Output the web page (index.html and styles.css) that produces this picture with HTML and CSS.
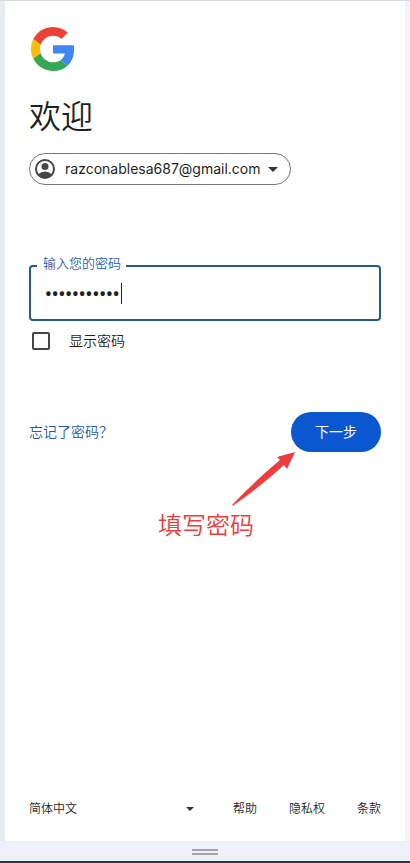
FILE: index.html
```html
<!DOCTYPE html>
<html lang="zh-CN">
<head>
    <meta charset="UTF-8">
    <meta name="viewport" content="width=device-width, initial-scale=1.0">
    <title>登录 - Google 账号</title>
    <link rel="stylesheet" href="styles.css">
</head>
<body>
    <div class="screen">
        <main>
            <!-- Logo -->
            <svg class="logo" viewBox="0 0 48 48" aria-label="Google">
                <path fill="#EA4335" d="M24 9.5c3.54 0 6.71 1.22 9.21 3.6l6.85-6.85C35.9 2.38 30.47 0 24 0 14.62 0 6.51 5.38 2.56 13.22l7.98 6.19C12.43 13.72 17.74 9.5 24 9.5z"/>
                <path fill="#4285F4" d="M46.98 24.55c0-1.57-.15-3.09-.38-4.55H24v9.02h12.94c-.58 2.96-2.26 5.48-4.78 7.18l7.73 6c4.51-4.18 7.09-10.36 7.09-17.65z"/>
                <path fill="#FBBC05" d="M10.53 28.59c-.48-1.45-.76-2.99-.76-4.59s.27-3.14.76-4.59l-7.98-6.19C.92 16.46 0 20.12 0 24c0 3.88.92 7.54 2.56 10.78l7.97-6.19z"/>
                <path fill="#34A853" d="M24 48c6.48 0 11.93-2.13 15.89-5.81l-7.73-6c-2.15 1.45-4.92 2.3-8.16 2.3-6.26 0-11.57-4.22-13.47-9.91l-7.98 6.19C6.51 42.62 14.62 48 24 48z"/>
            </svg>
            <h1>欢迎</h1>

            <!-- Account -->
            <button type="button" class="account">
                <svg class="avatar" viewBox="0 0 20 20">
                    <circle cx="10" cy="10" r="9" fill="none" stroke="currentColor" stroke-width="2"/>
                    <circle cx="10" cy="7.5" r="3.5"/>
                    <path d="M3 15.5Q6 12.5 10 12.5t7 3Q14 19 10 19t-7-3.5z"/>
                </svg>
                <span>razconablesa687@gmail.com</span>
                <svg class="arrow" viewBox="0 0 10 5"><path d="M0 0h10L5 5z"/></svg>
            </button>

            <!-- Password -->
            <form>
                <div class="field">
                    <label for="password">输入您的密码</label>
                    <input type="password" id="password" value="abcdefghijk">
                    <span class="caret"></span>
                </div>
                <div class="show">
                    <input type="checkbox" id="showPassword">
                    <label for="showPassword">显示密码</label>
                </div>
                <div class="actions">
                    <a href="#forgot">忘记了密码？</a>
                    <div class="next">
                        <button type="button">下一步</button>
                        <!-- Hint pointing at the button -->
                        <div class="hint">
                            <svg viewBox="0 0 64 54"><path d="M63 0 45 5l3 3Q25 27 0 53q1 1 2 0Q28 35 52 13l3 4z"/></svg>
                            <p>填写密码</p>
                        </div>
                    </div>
                </div>
            </form>
        </main>

        <!-- Footer -->
        <footer>
            <div class="language">
                <select aria-label="语言">
                    <option>简体中文</option>
                </select>
                <svg class="arrow" viewBox="0 0 10 5"><path d="M0 0h10L5 5z"/></svg>
            </div>
            <nav>
                <a href="#help">帮助</a>
                <a href="#privacy">隐私权</a>
                <a href="#terms">条款</a>
            </nav>
        </footer>
    </div>
    <div class="handle"></div>
</body>
</html>
```
FILE: styles.css
```css
* {
    margin: 0;
    padding: 0;
    box-sizing: border-box;
}

body {
    font-family: Roboto, "Noto Sans CJK SC", sans-serif;
    font-size: 14px;
    font-weight: 350;
    line-height: 20px;
    background: #eef1f9;
    color: #1f1f1f;
    min-height: 100vh;
    display: flex;
    flex-direction: column;
    border-top: 1px solid #d9dbe0;
    border-bottom: 2px solid #263746;
}

.screen {
    flex: 1;
    display: flex;
    flex-direction: column;
    justify-content: space-between;
    margin: 0 5px;
    padding: 26px 24px 22px;
    background: #fff;
    box-shadow: 5px 0 #f3f6f8, -5px 0 #e8ebf3;
}

.logo {
    display: block;
    width: 44px;
    height: 44px;
    margin-left: 2px;
}

h1 {
    margin: 26px 0 16px;
    font-size: 32px;
    font-weight: 350;
    line-height: 40px;
}

button,
input,
select {
    font: inherit;
    color: inherit;
}

a {
    color: inherit;
    text-decoration: none;
}

.account {
    display: flex;
    align-items: center;
    height: 32px;
    padding: 0 12px 0 5px;
    border: 1px solid #747775;
    border-radius: 16px;
    background: #fff;
    font-family: Inter, sans-serif;
    font-weight: 400;
}

.account span {
    margin: 0 7px 0 10px;
}

.avatar {
    width: 20px;
    height: 20px;
    color: #444746;
    fill: currentColor;
}

.arrow {
    width: 10px;
    height: 5px;
    fill: #333;
}

.field {
    position: relative;
    margin-top: 80px;
}

.field label {
    position: absolute;
    top: -11px;
    left: 8px;
    padding: 0 5px 0 6px;
    background: #fff;
    color: #2c5fae;
    font-size: 13px;
}

.field input {
    display: block;
    width: 100%;
    height: 56px;
    padding: 0 14px;
    border: 2px solid #265a8c;
    border-radius: 4px;
    outline: none;
    background: #fff;
    caret-color: transparent;
    font-family: "Noto Sans", sans-serif;
    font-size: 18px;
    font-weight: 500;
}

.caret {
    position: absolute;
    top: 18px;
    left: 92px;
    width: 1px;
    height: 21px;
    background: #1f1f1f;
}

.show {
    display: flex;
    align-items: center;
    gap: 19px;
    margin-top: 10px;
    padding-left: 3px;
}

.show input {
    appearance: none;
    width: 18px;
    height: 18px;
    border: 2px solid #444746;
    border-radius: 2px;
}

.actions {
    display: flex;
    justify-content: space-between;
    align-items: center;
    margin-top: 61px;
}

.actions a {
    color: #2a5a9c;
}

.next {
    position: relative;
}

.next button {
    display: block;
    height: 40px;
    padding: 0 24px;
    border: none;
    border-radius: 20px;
    background: #0b57d0;
    color: #fff;
    font-weight: 400;
}

.hint {
    position: absolute;
    top: 40px;
    right: 85px;
    width: 138px;
    color: #f03c3c;
}

.hint svg {
    display: block;
    width: 64px;
    height: 54px;
    margin-left: auto;
    fill: currentColor;
}

.hint p {
    font-size: 24px;
    line-height: 40px;
}

footer,
nav {
    display: flex;
    align-items: center;
}

footer {
    justify-content: space-between;
    font-size: 12px;
}

nav {
    gap: 32px;
}

.language {
    display: flex;
    align-items: center;
    width: 47%;
}

.language select {
    flex: 1;
    appearance: none;
    border: none;
    background: none;
}

.language .arrow {
    width: 8px;
    height: 4px;
}

.handle {
    align-self: center;
    width: 26px;
    height: 6px;
    margin: 8px 0 6px;
    border-top: 2px solid #a3a5ac;
    border-bottom: 2px solid #a3a5ac;
}
```
